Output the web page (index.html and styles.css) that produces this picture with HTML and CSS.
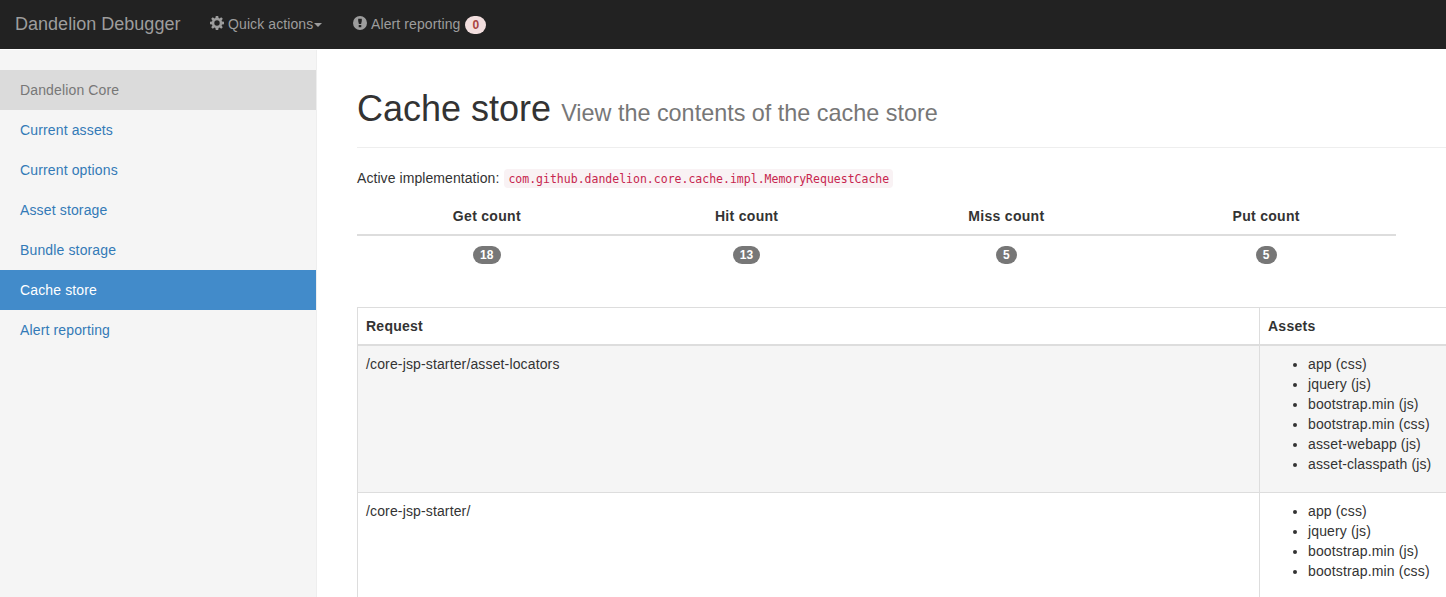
FILE: index.html
```html
<!DOCTYPE html>
<html lang="en">
<head>
<meta charset="utf-8">
<title>Dandelion Debugger</title>
<link rel="stylesheet" href="styles.css">
</head>
<body>
<nav class="navbar">
  <a class="brand">Dandelion Debugger</a>
  <a class="nav-item quick"><svg class="icon" viewBox="0 0 14 14"><path fill="currentColor" fill-rule="evenodd" d="M5.8 0h2.4l.4 2 .9.4L11.200 1.200l1.600 1.600L11.600 4.500l.4.900 2 .4v2.400l-2 .4-.4.900 1.200 1.700-1.600 1.600-1.700-1.200-.9.400-.4 2H5.800l-.4-2-.9-.4-1.700 1.200-1.600-1.600L2.400 9.500 2 8.600l-2-.4V5.800l2-.4.400-.9L1.200 2.800l1.600-1.600 1.700 1.200.9-.4zM7 4.300a2.700 2.700 0 1 0 0 5.400 2.700 2.700 0 0 0 0-5.400z"/></svg><span class="quick-text">Quick actions</span><span class="caret"></span></a>
  <a class="nav-item alert"><svg class="icon" viewBox="0 0 14 14"><path fill="currentColor" fill-rule="evenodd" d="M7 0a7 7 0 1 0 0 14A7 7 0 0 0 7 0zM5.200 2.800h3.600v2.300L8.100 8H5.900l-.7-2.900zM5.700 9h2.600v2.200H5.700z"/></svg><span class="alert-text">Alert reporting</span><span class="badge badge-alert">0</span></a>
</nav>
<div class="layout">
  <aside class="sidebar">
    <a class="side-item heading">Dandelion Core</a>
    <a class="side-item">Current assets</a>
    <a class="side-item">Current options</a>
    <a class="side-item">Asset storage</a>
    <a class="side-item">Bundle storage</a>
    <a class="side-item active">Cache store</a>
    <a class="side-item">Alert reporting</a>
  </aside>
  <main class="main">
    <header class="page-header"><h1><span class="title">Cache store</span> <small>View the contents of the cache store</small></h1></header>
    <p class="impl"><span>Active implementation:</span><code>com.github.dandelion.core.cache.impl.MemoryRequestCache</code></p>
    <table class="stats">
      <thead><tr><th>Get count</th><th>Hit count</th><th>Miss count</th><th>Put count</th></tr></thead>
      <tbody><tr><td><span class="badge">18</span></td><td><span class="badge">13</span></td><td><span class="badge">5</span></td><td><span class="badge">5</span></td></tr></tbody>
    </table>
    <section class="requests">
      <div class="row head"><div class="cell">Request</div><div class="cell">Assets</div></div>
      <div class="row striped">
        <div class="cell">/core-jsp-starter/asset-locators</div>
        <div class="cell"><ul><li>app (css)</li><li>jquery (js)</li><li>bootstrap.min (js)</li><li>bootstrap.min (css)</li><li>asset-webapp (js)</li><li>asset-classpath (js)</li></ul></div>
      </div>
      <div class="row">
        <div class="cell">/core-jsp-starter/</div>
        <div class="cell"><ul><li>app (css)</li><li>jquery (js)</li><li>bootstrap.min (js)</li><li>bootstrap.min (css)</li></ul></div>
      </div>
    </section>
  </main>
</div>
</body>
</html>
```
FILE: styles.css
```css
* { box-sizing: border-box; }
body {
  margin: 0;
  height: 597px;
  overflow: hidden;
  display: flex;
  flex-direction: column;
  font: 14px/20px "Liberation Sans", Arial, sans-serif;
  letter-spacing: 0.14px;
  color: #333;
  background: #fff;
}
.navbar {
  flex: none;
  display: flex;
  align-items: center;
  height: 49px;
  padding-left: 15px;
  background: #222;
  color: #9d9d9d;
  white-space: nowrap;
}
.brand { width: 195px; font-size: 18px; letter-spacing: 0.02px; padding-bottom: 1px; }
.nav-item { display: flex; align-items: center; padding-bottom: 1px; letter-spacing: 0.1px; }
.quick { width: 143px; }
.icon { width: 14px; height: 14px; margin: 0 4px 2px 0; }
.caret {
  margin: 2px 0 0 1px;
  border-top: 4px solid;
  border-left: 4px solid transparent;
  border-right: 4px solid transparent;
}
.badge {
  display: inline-block;
  min-width: 10px;
  padding: 3px 7px;
  font-size: 12px;
  font-weight: bold;
  line-height: 12px;
  color: #fff;
  background: #777;
  border-radius: 10px;
}
.badge-alert { margin: 2px 0 0 5px; background: #f2dede; color: #a94442; }
.layout { flex: 1; display: flex; min-height: 0; margin-top: 1px; }
.sidebar {
  flex: none;
  width: 317px;
  padding-top: 20px;
  background: #f5f5f5;
  border-right: 1px solid #eee;
}
.side-item { display: block; padding: 10px 20px; color: #337ab7; }
.heading { background: #dbdbdb; color: #777; }
.active { background: #428bca; color: #fff; }
.main { flex: none; width: 1169px; padding: 38px 0 0 40px; }
.page-header { height: 60px; padding-top: 1px; border-bottom: 1px solid #eee; }
h1 { margin: 0; font-size: 36px; font-weight: normal; line-height: 40px; letter-spacing: 0; white-space: nowrap; }
small { font-size: 23.4px; line-height: 1; color: #777; }
.impl { display: flex; margin: 20px 0 10px; letter-spacing: 0.07px; }
code {
  height: 19px;
  margin: 1px 0 0 5px;
  padding: 1px 4px 0;
  font: 11.5px/18px "DejaVu Sans Mono", monospace;
  letter-spacing: 0;
  color: #c7254e;
  background: #f9f2f4;
  border-radius: 4px;
}
.stats {
  width: 1039px;
  margin-bottom: 34px;
  table-layout: fixed;
  border-collapse: separate;
  border-spacing: 0;
  text-align: center;
}
.stats th { padding: 8px; border-bottom: 2px solid #ddd; letter-spacing: 0.3px; }
.stats td { height: 37px; padding: 7px 8px 9px; }
.requests { border: 1px solid #ddd; }
.row { display: grid; grid-template-columns: 902px 1fr; border-bottom: 1px solid #ddd; }
.cell { padding: 8px; }
.cell:first-child { border-right: 1px solid #ddd; }
.head { font-weight: bold; letter-spacing: 0.25px; border-bottom-width: 2px; }
.striped { background: #f5f5f5; }
ul { margin: 0 0 10px; padding-left: 40px; }
```
